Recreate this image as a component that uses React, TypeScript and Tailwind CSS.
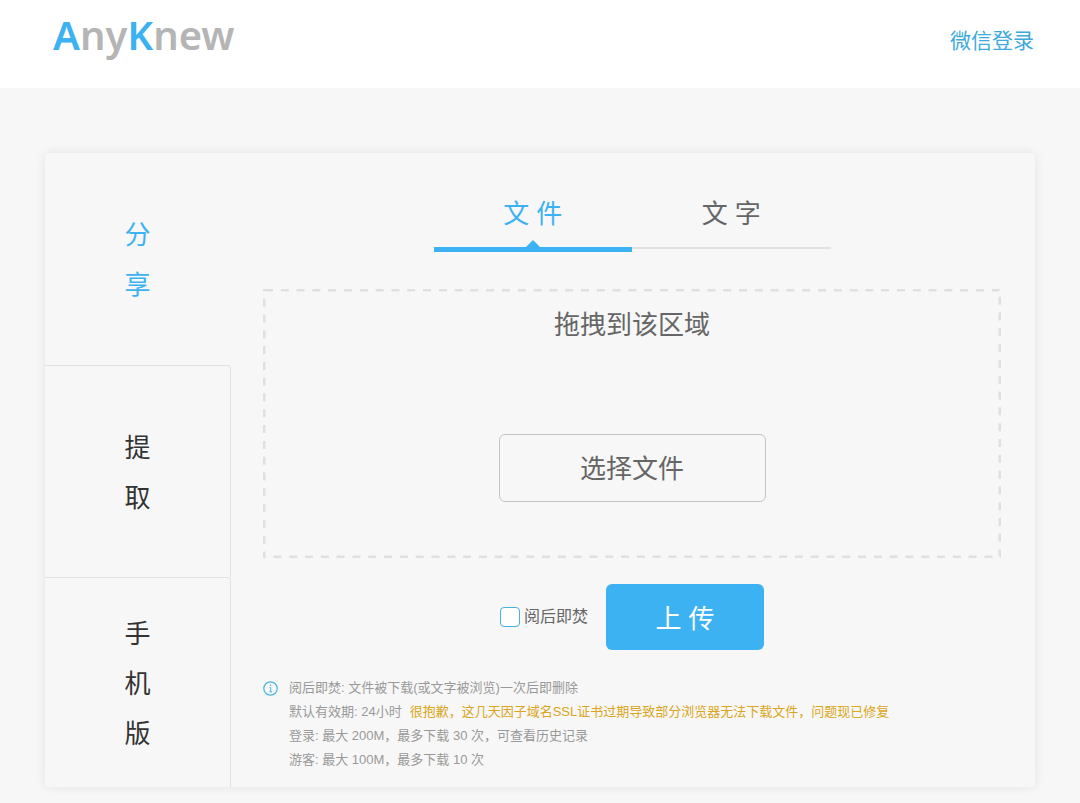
import React, { useState } from 'react';
import clsx from 'clsx';

const sections = ['分享', '提取', '手机版'];
const tabs = ['文 件', '文 字'];

const Logo: React.FC = () => (
  <a
    href="#"
    className="font-['Noto_Sans','Open_Sans',sans-serif] text-[40px] leading-[70px] font-semibold text-[#b5b5b5]"
  >
    <span className="text-[#3db2f2]">A</span>ny<span className="text-[#3db2f2]">K</span>new
  </a>
);

const InfoIcon: React.FC = () => (
  <svg viewBox="0 0 16 16" className="mt-1 h-4 w-4 shrink-0" fill="none" stroke="#45b3dc" aria-hidden="true">
    <circle cx="7.5" cy="8.5" r="6.7" strokeWidth="1.2" />
    <path d="M6.6 7.5h1.1v4.2M6.4 11.8h2.6" strokeWidth="1" />
    <circle cx="7.5" cy="5.3" r="0.8" fill="#45b3dc" stroke="none" />
  </svg>
);

const Sidebar: React.FC = () => {
  const [active, setActive] = useState(0);

  return (
    <nav className="flex w-[186px] shrink-0 flex-col">
      {sections.map((name, i) => (
        <button
          key={name}
          type="button"
          aria-label={name}
          onClick={() => setActive(i)}
          className={clsx(
            'flex min-h-[212px] flex-col items-center justify-center border-r pt-0.5 text-[26px] leading-[50px] last:min-h-[210px]',
            i > 0 && 'border-t',
            i === active
              ? 'border-transparent text-[#3db2f2]'
              : 'rounded-tr-sm border-[#e2e2e2] text-[#333]'
          )}
        >
          {name.split('').map((char) => (
            <span key={char}>{char}</span>
          ))}
        </button>
      ))}
    </nav>
  );
};

const Tabs: React.FC = () => {
  const [active, setActive] = useState(0);

  return (
    <div role="tablist" className="mx-auto flex w-full max-w-[397px] items-start">
      {tabs.map((name, i) => (
        <button
          key={name}
          type="button"
          role="tab"
          aria-selected={i === active}
          onClick={() => setActive(i)}
          className={clsx(
            'relative flex-1 pt-10 pb-3 text-[26px] leading-[42px]',
            i === active
              ? 'border-b-5 border-[#3db2f2] text-[#3db2f2]'
              : 'border-b-2 border-[#e2e2e2] text-[#666]'
          )}
        >
          {name}
          {i === active && (
            <svg viewBox="0 0 14 7" className="absolute bottom-0 left-1/2 h-[7px] w-[14px] -translate-x-1/2" aria-hidden="true">
              <path d="M0 7L7 0L14 7Z" fill="#3db2f2" />
            </svg>
          )}
        </button>
      ))}
    </div>
  );
};

const DropZone: React.FC = () => (
  <div className="relative mt-[37px] flex h-[269px] flex-col items-center">
    {/* Dashed outline */}
    <svg className="pointer-events-none absolute inset-0 h-full w-full" aria-hidden="true">
      <rect width="100%" height="100%" rx="2" fill="none" stroke="#e0e0e0" strokeWidth="5" strokeDasharray="8 7.8" />
    </svg>
    <p className="mt-4 text-[26px] leading-10 text-[#666]">拖拽到该区域</p>
    <button
      type="button"
      className="mt-[89px] h-[68px] w-[267px] rounded-md border border-[#c4c4c4] pt-0.5 text-[26px] text-[#666]"
    >
      选择文件
    </button>
  </div>
);

const App: React.FC = () => {
  return (
    <div className="min-h-screen bg-[#f7f7f7] pb-4 font-['Liberation_Sans','Noto_Sans_CJK_SC',sans-serif]">
      <header className="flex h-[88px] items-start justify-between bg-white pr-[46px] pl-[53px]">
        <Logo />
        <a href="#" className="mt-6 text-[21px] leading-[34px] text-[#3da9dd]">
          微信登录
        </a>
      </header>

      <main className="mx-[45px] mt-[65px] flex min-h-[634px] items-start rounded-sm shadow-[0_0_12px_rgba(0,0,0,0.08)]">
        <Sidebar />

        <section className="flex min-w-0 flex-1 flex-col pr-[34px] pl-8">
          <Tabs />
          <DropZone />

          <div className="mt-[26px] flex items-center justify-center gap-[18px]">
            <label className="flex items-center gap-1 text-base text-[#666]">
              <input
                type="checkbox"
                className="h-5 w-5 appearance-none rounded border border-[#45b3dc] bg-white checked:bg-[#3db2f2]"
              />
              阅后即焚
            </label>
            <button type="button" className="h-[66px] w-[158px] rounded-md bg-[#3db2f2] pt-1 text-[26px] text-white">
              上 传
            </button>
          </div>

          <div className="mt-[26px] flex gap-2.5 text-[13px] leading-6 text-[#999]">
            <InfoIcon />
            <div>
              <p>阅后即焚: 文件被下载(或文字被浏览)一次后即删除</p>
              <p>
                默认有效期: 24小时
                <span className="ml-2 text-[#daa520]">
                  很抱歉，这几天因子域名SSL证书过期导致部分浏览器无法下载文件，问题现已修复
                </span>
              </p>
              <p>登录: 最大 200M，最多下载 30 次，可查看历史记录</p>
              <p>游客: 最大 100M，最多下载 10 次</p>
            </div>
          </div>
        </section>
      </main>
    </div>
  );
};

export default App;
